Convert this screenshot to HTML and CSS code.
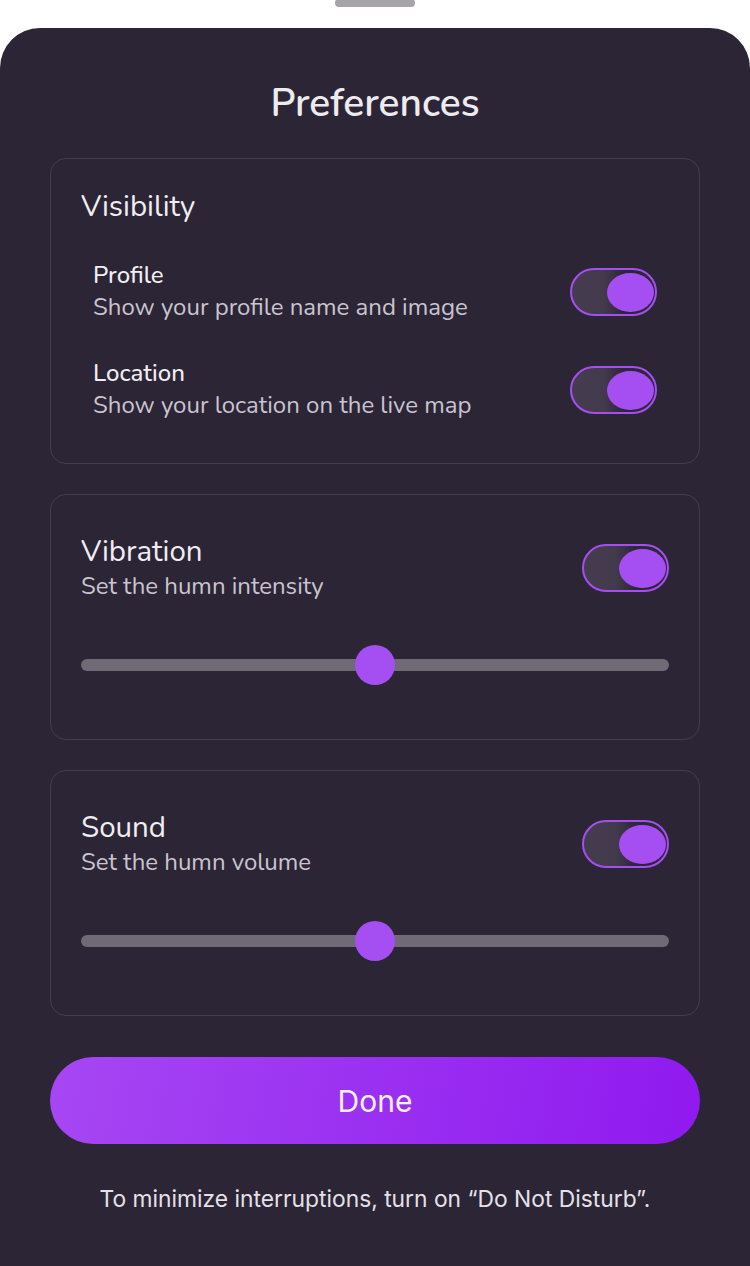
FILE: index.html
```html
<!DOCTYPE html>
<html lang="en">
<head>
<meta charset="utf-8">
<title>Preferences</title>
<link rel="stylesheet" href="styles.css">
</head>
<body>
<div class="handle"></div>
<main class="sheet">
  <h1 class="title">Preferences</h1>

  <section class="card">
    <h2 class="card-title">Visibility</h2>
    <div class="rows">
      <div class="row">
        <div class="text">
          <div class="row-title">Profile</div>
          <div class="row-sub">Show your profile name and image</div>
        </div>
        <div class="toggle"><span class="knob"></span></div>
      </div>
      <div class="row">
        <div class="text">
          <div class="row-title">Location</div>
          <div class="row-sub">Show your location on the live map</div>
        </div>
        <div class="toggle"><span class="knob"></span></div>
      </div>
    </div>
  </section>

  <section class="card card-slider">
    <div class="head">
      <div class="text">
        <h2 class="card-title">Vibration</h2>
        <div class="row-sub">Set the humn intensity</div>
      </div>
      <div class="toggle"><span class="knob"></span></div>
    </div>
    <div class="slider">
      <div class="track"></div>
      <div class="thumb" style="left: 50%"></div>
    </div>
  </section>

  <section class="card card-slider">
    <div class="head">
      <div class="text">
        <h2 class="card-title">Sound</h2>
        <div class="row-sub">Set the humn volume</div>
      </div>
      <div class="toggle"><span class="knob"></span></div>
    </div>
    <div class="slider">
      <div class="track"></div>
      <div class="thumb" style="left: 50%"></div>
    </div>
  </section>

  <button class="done">Done</button>
  <p class="note">To minimize interruptions, turn on “Do Not Disturb”.</p>
</main>
</body>
</html>
```

FILE: styles.css
```css
* { box-sizing: border-box; }

html, body {
  margin: 0;
  padding: 0;
  background: #ffffff;
}

body {
  font-family: "Nunito", "Lato", "Open Sans", sans-serif;
  color: #efedf2;
  height: 1266px;
  overflow: hidden;
  display: flex;
  flex-direction: column;
  align-items: center;
}

.handle {
  width: 80px;
  height: 8px;
  border-radius: 4px;
  background: #a6a4aa;
  margin-top: -1px;
  margin-bottom: 21px;
  flex: none;
}

.sheet {
  width: 750px;
  flex: 1;
  background: #2c2536;
  border-radius: 40px 40px 0 0;
  padding: 54px 50px 0;
  display: flex;
  flex-direction: column;
}

.title {
  margin: 0 0 32px;
  font-size: 39px;
  line-height: 44px;
  font-weight: 600;
  text-align: center;
  color: #ecebef;
}

.card {
  border: 1.5px solid #443d4d;
  border-radius: 16px;
  padding: 29px 30px 41px;
  margin-bottom: 30px;
}

.card-title {
  margin: 0;
  font-size: 29.5px;
  line-height: 36px;
  font-weight: 400;
  color: #f0eef2;
}

.rows {
  margin-top: 36px;
  display: flex;
  flex-direction: column;
  gap: 34px;
}

.row {
  display: flex;
  align-items: center;
  justify-content: space-between;
  padding: 0 12px;
}

.row-title {
  font-size: 24px;
  line-height: 30px;
  font-weight: 500;
  color: #f0eef2;
}

.row-sub {
  font-size: 24px;
  line-height: 34px;
  color: #c9c4cf;
}

.toggle {
  flex: none;
  width: 87px;
  height: 48px;
  border: 2px solid #a54ef2;
  border-radius: 24px;
  background: linear-gradient(to right, #453c50 0%, #433a4e 38%, #2e2738 62%, #2e2738 100%);
  display: flex;
  align-items: center;
  justify-content: flex-end;
  padding-right: 1px;
}

.knob {
  width: 47px;
  height: 39px;
  border-radius: 50%;
  background: #a54ef2;
}

.card-slider {
  padding: 38px 30px 54px;
}

.head {
  display: flex;
  align-items: center;
  justify-content: space-between;
}

.slider {
  position: relative;
  height: 40px;
  margin-top: 42px;
  display: flex;
  align-items: center;
}

.track {
  width: 100%;
  height: 12px;
  border-radius: 6px;
  background: #6f6a76;
}

.thumb {
  position: absolute;
  top: 0;
  width: 40px;
  height: 40px;
  margin-left: -20px;
  border-radius: 50%;
  background: #a54ef2;
}

.done {
  margin-top: 11px;
  height: 87px;
  width: 100%;
  border: none;
  border-radius: 44px;
  background: linear-gradient(100deg, #a747f3 0%, #9a30f1 50%, #9019ef 100%);
  color: #f3f0f6;
  font-family: "Inter", "Roboto", sans-serif;
  font-size: 30px;
  font-weight: 400;
  cursor: pointer;
}

.note {
  margin: 40px 0 0;
  text-align: center;
  font-family: "Inter", "Roboto", sans-serif;
  font-size: 22.8px;
  line-height: 30px;
  color: #e4e1e8;
}
```
